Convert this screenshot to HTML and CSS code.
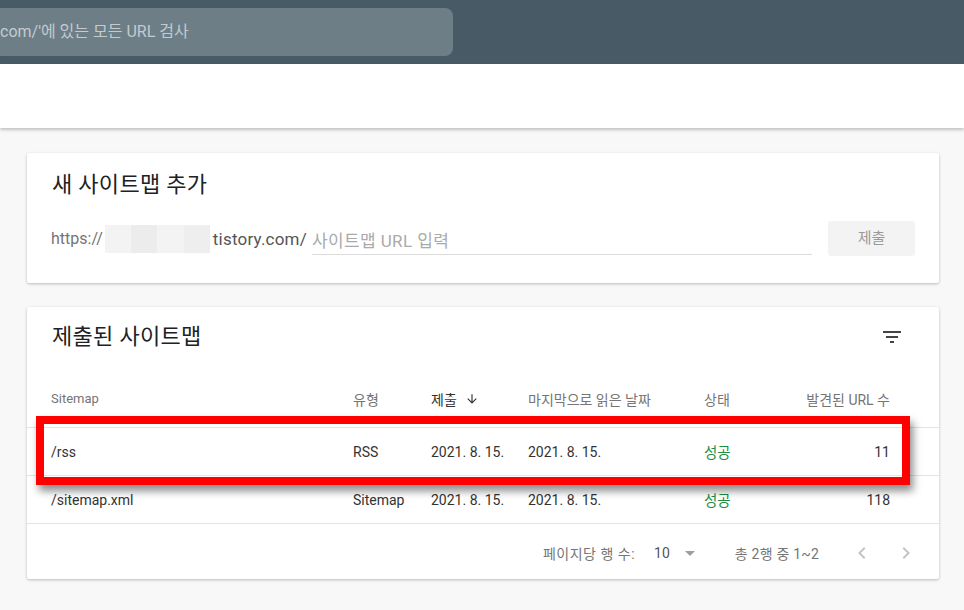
FILE: index.html
```html
<!DOCTYPE html>
<html lang="ko">
<head>
<meta charset="utf-8">
<link rel="stylesheet" href="styles.css">
</head>
<body>
<header class="topbar">
  <div class="search">com/'에 있는 모든 URL 검사</div>
</header>
<div class="band"></div>
<main class="main">
  <section class="card add-card">
    <h2 class="card-title">새 사이트맵 추가</h2>
    <div class="url-row">
      <span class="prefix">https://</span>
      <span class="blur"><i></i><i></i><i></i><i></i></span>
      <span class="domain">tistory.com/</span>
      <span class="input">사이트맵 URL 입력</span>
      <span class="submit">제출</span>
    </div>
  </section>

  <section class="card list-card">
    <div class="title-row">
      <h2 class="card-title">제출된 사이트맵</h2>
      <svg class="filter" width="24" height="24" viewBox="0 0 24 24"><path d="M3 6h18v2H3zM6 11h12v2H6zM10 16h4v2h-4z" fill="#444"/></svg>
    </div>
    <div class="row head">
      <span>Sitemap</span>
      <span class="ko">유형</span>
      <span class="sorted"><span class="ko">제출</span> <svg width="14" height="14" viewBox="0 0 24 24"><path d="M20 12l-1.41-1.41L13 16.17V4h-2v12.17l-5.58-5.59L4 12l8 8 8-8z" fill="#333"/></svg></span>
      <span class="ko">마지막으로 읽은 날짜</span>
      <span class="ko">상태</span>
      <span class="num ko">발견된 URL 수</span>
    </div>
    <div class="row">
      <span>/rss</span>
      <span>RSS</span>
      <span>2021. 8. 15.</span>
      <span>2021. 8. 15.</span>
      <span class="ok">성공</span>
      <span class="num">11</span>
    </div>
    <div class="row">
      <span>/sitemap.xml</span>
      <span>Sitemap</span>
      <span>2021. 8. 15.</span>
      <span>2021. 8. 15.</span>
      <span class="ok">성공</span>
      <span class="num">118</span>
    </div>
    <div class="footer">
      <span class="label">페이지당 행 수:</span>
      <span class="per">10</span>
      <span class="tri"></span>
      <span class="range">총 2행 중 1~2</span>
      <svg class="nav prev" width="24" height="24" viewBox="0 0 24 24"><path d="M15.4 7.4L14 6l-6 6 6 6 1.4-1.4L10.8 12z" fill="#c4c4c4"/></svg>
      <svg class="nav" width="24" height="24" viewBox="0 0 24 24"><path d="M10 6L8.6 7.4 13.2 12l-4.6 4.6L10 18l6-6z" fill="#c4c4c4"/></svg>
    </div>
    <div class="highlight"></div>
  </section>
</main>
</body>
</html>
```

FILE: styles.css
```css
* { box-sizing: border-box; }
html, body { margin: 0; padding: 0; }
body {
  width: 964px;
  height: 610px;
  overflow: hidden;
  background: #f8f8f8;
  font-family: Roboto, "Noto Sans CJK KR", sans-serif;
  color: #333;
}
.topbar {
  height: 64px;
  background: #475a65;
  padding-top: 8px;
}
.search {
  width: 453px;
  height: 48px;
  background: #6d7e87;
  border-radius: 0 8px 8px 0;
  color: #c3cbcf;
  font-size: 16px;
  line-height: 48px;
  padding-left: 0;
  white-space: nowrap;
}
.band {
  height: 64px;
  background: #fff;
  box-shadow: 0 2px 3px rgba(0,0,0,0.22);
  position: relative;
}
.main {
  padding: 25px 25px 0 27px;
  display: flex;
  flex-direction: column;
  gap: 24px;
}
.card {
  width: 912px;
  background: #fff;
  border-radius: 2px;
  box-shadow: 0 1px 3px rgba(0,0,0,0.25);
}
.card-title {
  margin: 0;
  font-size: 22px;
  font-weight: 400;
  line-height: 28px;
  color: #202124;
  letter-spacing: 0.3px;
}
.add-card {
  height: 130px;
  padding: 18px 24px 0 25px;
}
.url-row {
  margin-top: 22px;
  height: 35px;
  display: flex;
  align-items: center;
  font-size: 16px;
}
.prefix { color: #757575; margin-left: -1px; }
.domain { color: #555; margin-left: 3px; font-size: 17px; letter-spacing: 0.2px; }
.blur {
  display: inline-flex;
  width: 105px;
  height: 28px;
  margin-left: 2px;
  background: #f0f0f0;
}
.blur i { flex: 1; background: #f3f3f3; }
.blur i:nth-child(2) { background: #ececec; }
.blur i:nth-child(4) { background: #eeeeee; }
.input {
  margin-left: 5px;
  width: 500px;
  height: 32px;
  line-height: 36px;
  font-size: 17px;
  letter-spacing: 0.4px;
  color: #aaa;
  border-bottom: 1px solid #dcdcdc;
  align-self: flex-start;
  margin-top: 2px;
}
.submit {
  margin-left: auto;
  width: 87px;
  height: 35px;
  background: #f3f3f3;
  border-radius: 3px;
  color: #9a9a9a;
  font-size: 15px;
  line-height: 35px;
  text-align: center;
}
.list-card {
  height: 272px;
  position: relative;
  padding-top: 16px;
}
.title-row {
  display: flex;
  justify-content: space-between;
  align-items: center;
  padding: 0 35px 0 25px;
  height: 28px;
}
.row {
  display: grid;
  grid-template-columns: 302px 78px 97px 176px 80px 1fr;
  align-items: center;
  height: 48px;
  padding: 0 49px 0 24px;
  border-top: 1px solid #e3e3e3;
  font-size: 14px;
  color: #333;
  white-space: nowrap;
}
.row.head {
  margin-top: 19px;
  height: 57px;
  border-top: none;
  font-size: 13px;
  color: #757575;
  padding-bottom: 0;
}
.row.head .ko { font-size: 14px; }
.row.head .sorted {
  color: #333;
  display: flex;
  align-items: center;
  gap: 8px;
}
.row .ok { color: #1e8e3e; font-size: 14.5px; }
.num { text-align: right; }
.footer {
  border-top: 1px solid #e3e3e3;
  height: 56px;
  padding-top: 3px;
  display: flex;
  align-items: center;
  justify-content: flex-end;
  padding-right: 21px;
  font-size: 14px;
  color: #757575;
}
.label { letter-spacing: 0.5px; }
.per { margin-left: 19px; font-size: 14px; color: #555; }
.tri {
  margin-left: 15px;
  width: 0;
  height: 0;
  border-left: 5px solid transparent;
  border-right: 5px solid transparent;
  border-top: 5px solid #9e9e9e;
}
.range { margin-left: 40px; font-size: 14px; letter-spacing: 0.2px; }
.nav.prev { margin-left: 31px; margin-right: 20px; }
.highlight {
  position: absolute;
  left: 9px;
  top: 109px;
  width: 874px;
  height: 69px;
  border: 8px solid #ff0000;
  box-shadow: 3px 6px 8px rgba(0,0,0,0.45);
  pointer-events: none;
}
```
